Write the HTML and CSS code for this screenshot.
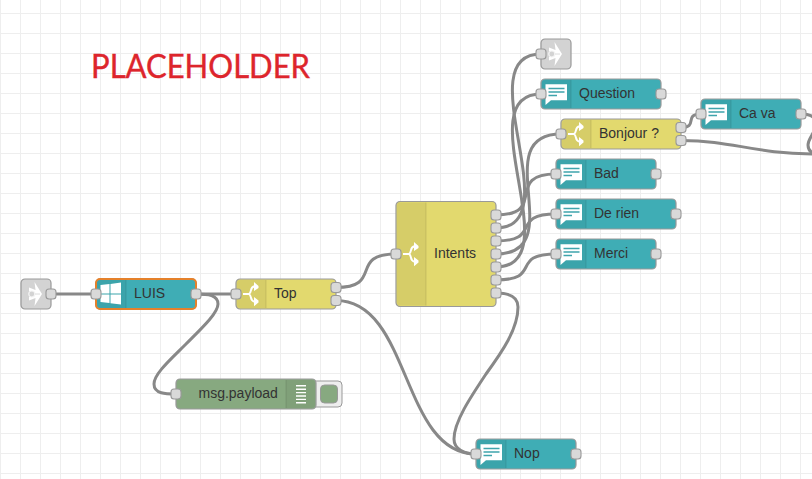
FILE: index.html
```html
<!DOCTYPE html>
<html lang="en">
<head>
<meta charset="utf-8">
<title>Flow editor</title>
<link rel="stylesheet" href="styles.css">
</head>
<body>
<svg class="canvas" width="812" height="479" viewBox="0 0 812 479">
  <defs>
    <pattern id="grid" width="20" height="20" y="13" patternUnits="userSpaceOnUse">
      <path class="grid-line" d="M0.5 0V20M0 0.5H20"/>
    </pattern>
    <rect id="port" class="port" x="-5" y="-5" width="10" height="10" rx="3"/>
    <g id="chat">
      <path fill="#fff" d="M4.500 5.300H26V21.300H10L4.500 26Z"/>
      <path class="chat-lines" d="M7.500 9.500H23.500M7.500 13H23.500M7.500 16.500H16"/>
    </g>
    <g id="switch" class="switch">
      <path d="M7 15H13C16.200 13 13.500 8 18.500 7.300M13 15C16.200 17 13.500 22 18.500 22.700"/>
      <path class="solid" d="M18 3L22.500 7V9L18 12ZM18 18L22.500 21.500V23.500L18 27.300Z"/>
    </g>
    <g id="link">
      <path fill="#fff" d="M13.500 3L21 15L13.500 27L14.500 19L8 21.500V18L13 15L8 12V8.500L14.500 11Z"/>
      <circle class="link-ring" cx="10.800" cy="15" r="3"/>
      <path class="link-stem" d="M14 15H19"/>
    </g>
  </defs>

  <rect width="812" height="479" fill="url(#grid)"/>
  <text class="title" x="91" y="78" textLength="219" lengthAdjust="spacingAndGlyphs">PLACEHOLDER</text>

  <g class="wires">
    <path d="M51 294H96M196 294H236"/>
    <path d="M196 294C208 294 218 295 218 304S202 328 186 344S154 374 154 384S166 394 176 394"/>
    <path d="M336 287.500C384 287.500 348 254 396 254"/>
    <path d="M336 300.500C411 300.500 401 454 476 454"/>
    <path d="M496 228C571 228 466 54 541 54"/>
    <path d="M496 254C571 254 486 134 561 134"/>
    <path d="M496 267C571 267 466 94 541 94"/>
    <path d="M496 215C548 215 504 174 556 174"/>
    <path d="M496 241C543 241 509 214 556 214"/>
    <path d="M496 280C543 280 509 254 556 254"/>
    <path d="M496 293C508 293 518 296 518 307C518 329 502 352 486 374C470 398 454 422 454 439C454 449 464 454 476 454"/>
    <path d="M681 127.500C699 127.500 683 114 701 114"/>
    <path d="M681 140.500C736 140.500 750 154 820 154"/>
    <path d="M801 114C809 114 816 116 816 124C816 132 808 138 808 145C808 151 812 154 820 154"/>
  </g>

  <g transform="translate(21 279)">
    <rect class="node gray" width="30" height="30" rx="4"/><use href="#link"/>
    <use href="#port" x="30" y="15"/>
  </g>
  <g transform="translate(541 39)">
    <rect class="node gray" width="30" height="30" rx="4"/><use href="#link"/>
    <use href="#port" y="15"/>
  </g>

  <g transform="translate(96 279)">
    <rect class="node teal" width="100" height="30" rx="4"/>
    <path class="shade" d="M4 1H30V29H4Q1 29 1 26V4Q1 1 4 1Z"/><path class="divider" d="M30 1V29"/>
    <path fill="#fff" d="M4.500 6L13.500 5V14.400H4.500ZM14.500 4.900L25 3.500V14.400H14.500ZM4.500 15.500H13.500V24L4.500 23ZM14.500 15.500H25V25.500L14.500 24.200Z"/>
    <rect class="selected" width="100" height="30" rx="4"/>
    <text class="label" x="38" y="19">LUIS</text>
    <use href="#port" y="15"/><use href="#port" x="100" y="15"/>
  </g>

  <g transform="translate(236 279)">
    <rect class="node yellow" width="100" height="30" rx="4"/>
    <path class="shade" d="M4 1H30V29H4Q1 29 1 26V4Q1 1 4 1Z"/><path class="divider" d="M30 1V29"/>
    <use href="#switch"/><text class="label" x="38" y="19">Top</text>
    <use href="#port" y="15"/><use href="#port" x="100" y="8.500"/><use href="#port" x="100" y="21.500"/>
  </g>

  <g transform="translate(396 201.500)">
    <rect class="node yellow" width="100" height="105" rx="4"/>
    <path class="shade" d="M4 1H30V104H4Q1 104 1 101V4Q1 1 4 1Z"/><path class="divider" d="M30 1V104"/>
    <use href="#switch" y="37.500"/><text class="label" x="38" y="56.500">Intents</text>
    <use href="#port" y="52.500"/>
    <use href="#port" x="100" y="13.500"/><use href="#port" x="100" y="26.500"/><use href="#port" x="100" y="39.500"/>
    <use href="#port" x="100" y="52.500"/><use href="#port" x="100" y="65.500"/><use href="#port" x="100" y="78.500"/>
    <use href="#port" x="100" y="91.500"/>
  </g>

  <g transform="translate(176 379)">
    <rect class="debug-button" x="136" y="2" width="30" height="26" rx="4"/>
    <rect class="debug-toggle" x="144.500" y="6" width="17" height="18" rx="4"/>
    <rect class="node green" width="140" height="30" rx="4"/>
    <path class="shade" d="M110 1H136Q139 1 139 4V26Q139 29 136 29H110Z"/><path class="divider" d="M110 1V29"/>
    <path class="debug-lines" d="M120 6.800H130M120 10.200H130M120 13.600H130M120 17H130M120 20.400H130M120 23.800H130"/>
    <text class="label" x="22.500" y="19">msg.payload</text>
    <use href="#port" y="15"/>
  </g>

  <g transform="translate(541 79)">
    <rect class="node teal" width="120" height="30" rx="4"/>
    <path class="shade" d="M4 1H30V29H4Q1 29 1 26V4Q1 1 4 1Z"/><path class="divider" d="M30 1V29"/>
    <use href="#chat"/><text class="label" x="38" y="19">Question</text>
    <use href="#port" y="15"/><use href="#port" x="120" y="15"/>
  </g>
  <g transform="translate(561 119)">
    <rect class="node yellow" width="120" height="30" rx="4"/>
    <path class="shade" d="M4 1H30V29H4Q1 29 1 26V4Q1 1 4 1Z"/><path class="divider" d="M30 1V29"/>
    <use href="#switch"/><text class="label" x="38" y="19">Bonjour ?</text>
    <use href="#port" y="15"/><use href="#port" x="120" y="8.500"/><use href="#port" x="120" y="21.500"/>
  </g>
  <g transform="translate(556 159)">
    <rect class="node teal" width="100" height="30" rx="4"/>
    <path class="shade" d="M4 1H30V29H4Q1 29 1 26V4Q1 1 4 1Z"/><path class="divider" d="M30 1V29"/>
    <use href="#chat"/><text class="label" x="38" y="19">Bad</text>
    <use href="#port" y="15"/><use href="#port" x="100" y="15"/>
  </g>
  <g transform="translate(556 199)">
    <rect class="node teal" width="120" height="30" rx="4"/>
    <path class="shade" d="M4 1H30V29H4Q1 29 1 26V4Q1 1 4 1Z"/><path class="divider" d="M30 1V29"/>
    <use href="#chat"/><text class="label" x="38" y="19">De rien</text>
    <use href="#port" y="15"/><use href="#port" x="120" y="15"/>
  </g>
  <g transform="translate(556 239)">
    <rect class="node teal" width="100" height="30" rx="4"/>
    <path class="shade" d="M4 1H30V29H4Q1 29 1 26V4Q1 1 4 1Z"/><path class="divider" d="M30 1V29"/>
    <use href="#chat"/><text class="label" x="38" y="19">Merci</text>
    <use href="#port" y="15"/><use href="#port" x="100" y="15"/>
  </g>
  <g transform="translate(701 99)">
    <rect class="node teal" width="100" height="30" rx="4"/>
    <path class="shade" d="M4 1H30V29H4Q1 29 1 26V4Q1 1 4 1Z"/><path class="divider" d="M30 1V29"/>
    <use href="#chat"/><text class="label" x="38" y="19">Ca va</text>
    <use href="#port" y="15"/><use href="#port" x="100" y="15"/>
  </g>
  <g transform="translate(476 439)">
    <rect class="node teal" width="100" height="30" rx="4"/>
    <path class="shade" d="M4 1H30V29H4Q1 29 1 26V4Q1 1 4 1Z"/><path class="divider" d="M30 1V29"/>
    <use href="#chat"/><text class="label" x="38" y="19">Nop</text>
    <use href="#port" y="15"/><use href="#port" x="100" y="15"/>
  </g>
</svg>
</body>
</html>
```
FILE: styles.css
```css
body {
  margin: 0;
  background: #fff;
  overflow: hidden;
}
.canvas { display: block; }
.grid-line { stroke: #eee; fill: none; }
.title {
  font-family: Lato, "Open Sans", sans-serif;
  font-size: 32px;
  fill: #dd252c;
  stroke: #dd252c;
  stroke-width: 0.4;
}
.wires path {
  fill: none;
  stroke: #888;
  stroke-width: 3;
}
.node { stroke: #999; stroke-width: 1.2; }
.gray { fill: #d3d3d3; }
.teal { fill: #3fadb5; }
.yellow { fill: #e2d96e; }
.green { fill: #87a980; }
.shade { fill: #000; fill-opacity: 0.05; }
.divider { stroke: #000; stroke-opacity: 0.1; }
.selected { fill: none; stroke: #e5812b; stroke-width: 2; }
.port { fill: #d9d9d9; stroke: #999; stroke-width: 1.1; }
.label {
  font-family: "Liberation Sans", Arial, sans-serif;
  font-size: 14px;
  fill: #333;
}
.chat-lines { stroke: #3fa4ac; stroke-width: 1.3; fill: none; }
.switch path { fill: none; stroke: #fff; stroke-width: 2; }
.switch .solid { fill: #fff; stroke: none; }
.link-ring { fill: #d3d3d3; stroke: #f4f4f4; stroke-width: 1.2; }
.link-stem { stroke: #d3d3d3; stroke-width: 0.8; }
.debug-button { fill: #eee; stroke: #999; }
.debug-toggle { fill: #87a980; stroke: #999; }
.debug-lines { stroke: #fff; stroke-width: 1.4; }
```
